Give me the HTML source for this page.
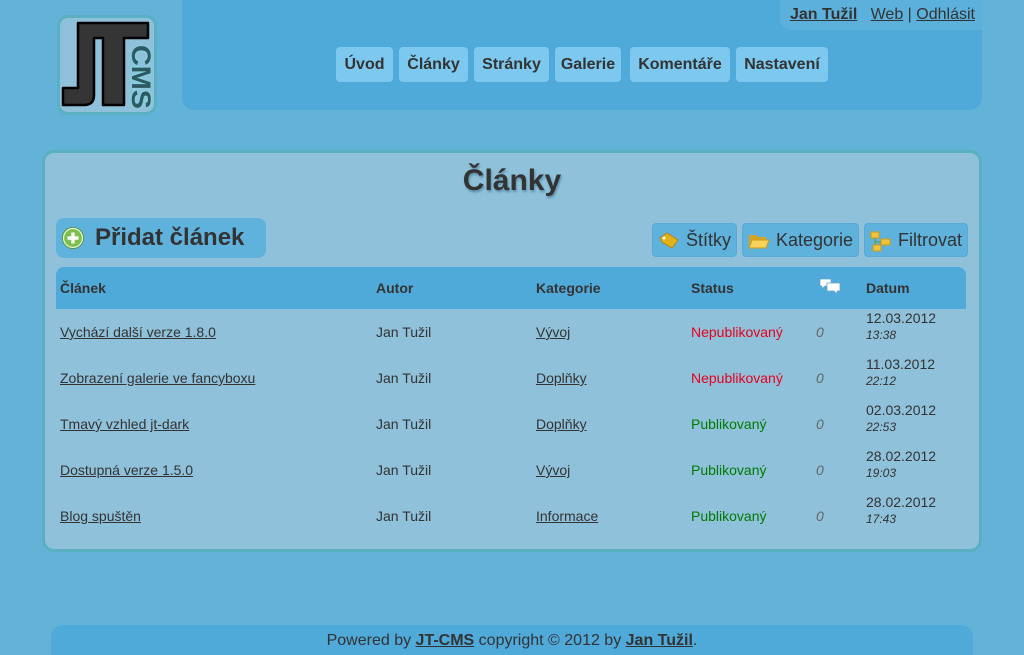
<!DOCTYPE html>
<html><head><meta charset="utf-8"><style>
*{margin:0;padding:0;box-sizing:border-box}
html,body{width:1024px;height:655px;overflow:hidden}
body{background:#63b3d9;font-family:"Liberation Sans",Arial,sans-serif;color:#333;position:relative}
a{color:#333;text-decoration:underline}
.abs{position:absolute}
#logo{left:57px;top:15px;width:100px;height:100px;background:#8fc1da;border:3px solid #5ab0c0;border-radius:11px}
#hdr{left:182px;top:0;width:800px;height:110px;background:#4fa9d9;border-radius:0 0 12px 12px}
#user{left:780px;top:0;width:202px;height:30px;background:#5cb1dc;border-radius:0 0 0 10px;font-size:16px;line-height:29px;padding-left:10px;color:#333}
.nav{top:47px;height:35px;background:#7cc8ef;border-radius:4px;font-weight:bold;font-size:16px;line-height:35px;text-align:center}
#main{left:42px;top:150px;width:940px;height:402px;background:#8fc1da;border:3px solid #5ab0c0;border-radius:12px}
h1{position:absolute;left:0;width:100%;top:164px;text-align:center;font-size:30px;font-weight:bold;text-shadow:1px 2px 2px rgba(60,110,140,.6)}
#add{left:56px;top:218px;width:210px;height:40px;background:#5fb2dc;border-radius:8px;font-size:24px;font-weight:bold;line-height:40px;padding-left:39px}
.tb{top:223px;height:34px;background:#5fb2dc;border:1px solid #58aad6;border-radius:4px;font-size:18px;line-height:33px}
#thead{left:56px;top:267px;width:910px;height:42px;background:#4fa9d9;border-radius:8px 8px 0 0}
.th{top:280px;font-size:14px;font-weight:bold}
.td{font-size:14px}
.red{color:#e8001c}.grn{color:#007a00}
.zero{font-style:italic;color:#666}
#foot{left:51px;top:625px;width:922px;height:30px;background:#4fa9d9;border-radius:12px 12px 0 0;text-align:center;font-size:16px;line-height:31px}
</style></head><body>
<div id="logo" class="abs">
<svg width="100" height="100" viewBox="0 0 100 100" style="position:absolute;left:-3px;top:-3px">
<defs><filter id="gl"><feGaussianBlur stdDeviation="1.5"/></filter></defs>
<path d="M21,8 H91 V23 H67 V90 H46 V23 H37 V80 Q37,90 27,90 H6 V73 H21 Z" fill="#353535" stroke="#000" stroke-width="2.5" stroke-linejoin="round"/>
<g transform="translate(75,30) rotate(90)">
<text x="0" y="0" font-family="Liberation Sans,sans-serif" font-size="27" font-weight="bold" fill="#7ee0e8" filter="url(#gl)" textLength="64" lengthAdjust="spacingAndGlyphs">CMS</text>
<text x="0" y="0" font-family="Liberation Sans,sans-serif" font-size="27" font-weight="bold" fill="#2d5960" textLength="64" lengthAdjust="spacingAndGlyphs">CMS</text>
</g>
</svg>
</div>
<div id="hdr" class="abs"></div>
<div id="user" class="abs"><a style="font-weight:bold">Jan Tužil</a>&nbsp;&nbsp; <a>Web</a> | <a>Odhlásit</a></div>
<div class="abs nav" style="left:336px;width:57px">Úvod</div>
<div class="abs nav" style="left:399px;width:69px">Články</div>
<div class="abs nav" style="left:474px;width:75px">Stránky</div>
<div class="abs nav" style="left:555px;width:66px">Galerie</div>
<div class="abs nav" style="left:630px;width:100px">Komentáře</div>
<div class="abs nav" style="left:736px;width:92px">Nastavení</div>

<div id="main" class="abs"></div>
<h1>Články</h1>
<div id="add" class="abs">Přidat článek
<svg class="abs" style="left:5px;top:8px" width="24" height="24" viewBox="0 0 24 24"><circle cx="12" cy="12" r="11" fill="#4e8f2e"/><circle cx="12" cy="12" r="9.5" fill="#7cbf4a" stroke="#e8f5dc" stroke-width="1.3"/><path d="M12 6.5v11M6.5 12h11" stroke="#fff" stroke-width="3.4"/></svg></div>

<div class="abs tb" style="left:652px;width:85px;padding-left:33px">Štítky
<svg class="abs" style="left:5px;top:8px" width="22" height="18" viewBox="0 0 22 18"><path d="M2 6 L9 1 L20 8 L14 16 L4 10 Z" fill="#e3b21b" stroke="#b8860b"/><circle cx="6" cy="6" r="1.5" fill="#fff"/></svg></div>
<div class="abs tb" style="left:742px;width:117px;padding-left:33px">Kategorie
<svg class="abs" style="left:5px;top:8px" width="22" height="18" viewBox="0 0 22 18"><path d="M1 3h7l2 2h8v11H1z" fill="#d9a520"/><path d="M4 8h17l-3 8H1z" fill="#f7d35a" stroke="#c99a1a"/></svg></div>
<div class="abs tb" style="left:864px;width:104px;padding-left:33px">Filtrovat
<svg class="abs" style="left:5px;top:6px" width="22" height="22" viewBox="0 0 22 22"><path d="M5 8v8h6M5 12h6" stroke="#5a9a3a" fill="none"/><rect x="1" y="2" width="8" height="6" fill="#f0c43a" stroke="#c99a1a"/><rect x="11" y="9" width="9" height="6" fill="#f0c43a" stroke="#c99a1a"/><rect x="3" y="15" width="8" height="6" fill="#f0c43a" stroke="#c99a1a"/></svg></div>

<div id="thead" class="abs"></div>
<div class="abs th" style="left:60px">Článek</div>
<div class="abs th" style="left:376px">Autor</div>
<div class="abs th" style="left:536px">Kategorie</div>
<div class="abs th" style="left:691px">Status</div>
<svg class="abs" style="left:818px;top:277px" width="24" height="18" viewBox="0 0 24 18"><path d="M2 2h11v7H7l-3 3V9H2z" fill="#fff" stroke="#6aa8cc" stroke-width=".8"/><path d="M9 6h13v8h-3v3l-3-3H9z" fill="#fff" stroke="#6aa8cc" stroke-width=".8"/></svg>
<div class="abs th" style="left:866px">Datum</div>

<div class="abs td" style="left:60px;top:324px"><a>Vychází další verze 1.8.0</a></div>
<div class="abs td" style="left:376px;top:324px">Jan Tužil</div>
<div class="abs td" style="left:536px;top:324px"><a>Vývoj</a></div>
<div class="abs td red" style="left:691px;top:324px">Nepublikovaný</div>
<div class="abs td zero" style="left:816px;top:324px">0</div>
<div class="abs td" style="left:866px;top:310px;line-height:16px">12.03.2012<br><i style="font-size:12px">13:38</i></div>

<div class="abs td" style="left:60px;top:370px"><a>Zobrazení galerie ve fancyboxu</a></div>
<div class="abs td" style="left:376px;top:370px">Jan Tužil</div>
<div class="abs td" style="left:536px;top:370px"><a>Doplňky</a></div>
<div class="abs td red" style="left:691px;top:370px">Nepublikovaný</div>
<div class="abs td zero" style="left:816px;top:370px">0</div>
<div class="abs td" style="left:866px;top:356px;line-height:16px">11.03.2012<br><i style="font-size:12px">22:12</i></div>

<div class="abs td" style="left:60px;top:416px"><a>Tmavý vzhled jt-dark</a></div>
<div class="abs td" style="left:376px;top:416px">Jan Tužil</div>
<div class="abs td" style="left:536px;top:416px"><a>Doplňky</a></div>
<div class="abs td grn" style="left:691px;top:416px">Publikovaný</div>
<div class="abs td zero" style="left:816px;top:416px">0</div>
<div class="abs td" style="left:866px;top:402px;line-height:16px">02.03.2012<br><i style="font-size:12px">22:53</i></div>

<div class="abs td" style="left:60px;top:462px"><a>Dostupná verze 1.5.0</a></div>
<div class="abs td" style="left:376px;top:462px">Jan Tužil</div>
<div class="abs td" style="left:536px;top:462px"><a>Vývoj</a></div>
<div class="abs td grn" style="left:691px;top:462px">Publikovaný</div>
<div class="abs td zero" style="left:816px;top:462px">0</div>
<div class="abs td" style="left:866px;top:448px;line-height:16px">28.02.2012<br><i style="font-size:12px">19:03</i></div>

<div class="abs td" style="left:60px;top:508px"><a>Blog spuštěn</a></div>
<div class="abs td" style="left:376px;top:508px">Jan Tužil</div>
<div class="abs td" style="left:536px;top:508px"><a>Informace</a></div>
<div class="abs td grn" style="left:691px;top:508px">Publikovaný</div>
<div class="abs td zero" style="left:816px;top:508px">0</div>
<div class="abs td" style="left:866px;top:494px;line-height:16px">28.02.2012<br><i style="font-size:12px">17:43</i></div>

<div id="foot" class="abs">Powered by <a style="font-weight:bold">JT-CMS</a> copyright © 2012 by <a style="font-weight:bold">Jan Tužil</a>.</div>
</body></html>
